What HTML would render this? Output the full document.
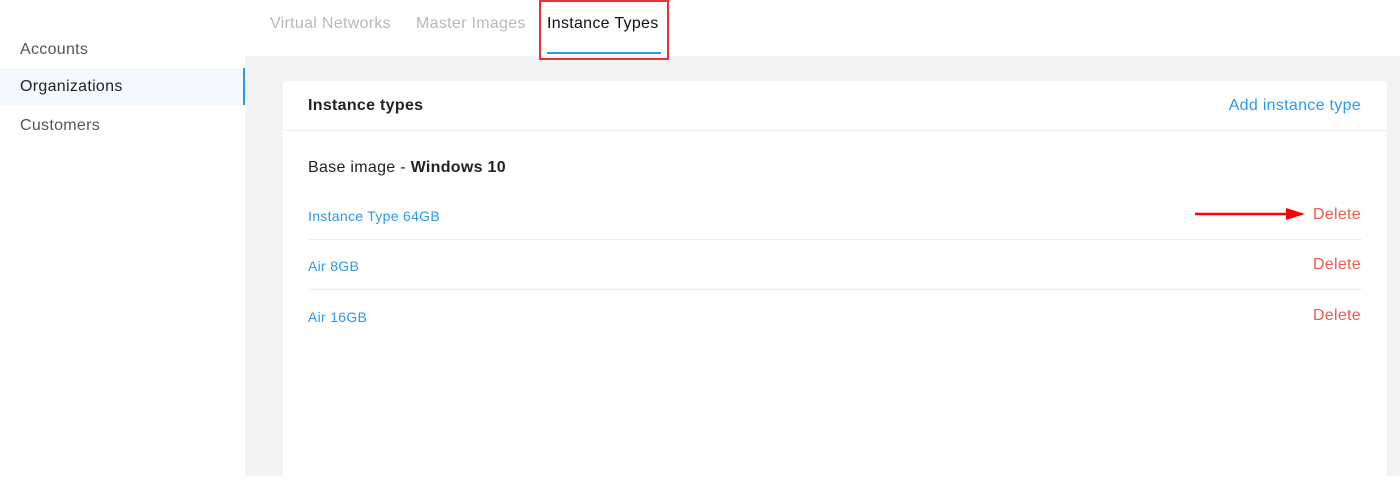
<!DOCTYPE html>
<html><head><style>
body{margin:0;width:1400px;height:476px;overflow:hidden;background:#fff;font-family:"Liberation Sans",sans-serif;position:relative}
.a{position:absolute;white-space:nowrap;letter-spacing:0.3px}
.r{right:39px}
</style></head><body>
<div class="a" style="left:245px;top:56px;width:1155px;height:420px;background:#f2f3f5"></div>
<div class="a" style="left:0;top:68px;width:243px;height:37px;background:#f3f9fe;border-right:2px solid #2a9af0"></div>
<div class="a" style="left:20px;top:41px;font-size:16px;color:#555">Accounts</div>
<div class="a" style="left:20px;top:78px;font-size:16px;color:#222">Organizations</div>
<div class="a" style="left:20px;top:117px;font-size:16px;color:#555">Customers</div>
<div class="a" style="left:270px;top:15px;font-size:16px;color:#b5b9be">Virtual Networks</div>
<div class="a" style="left:416px;top:15px;font-size:16px;color:#b5b9be">Master Images</div>
<div class="a" style="left:547px;top:15px;font-size:16px;color:#111">Instance Types</div>
<div class="a" style="left:547px;top:52px;width:114px;height:2px;background:#2a9af0"></div>
<div class="a" style="left:539px;top:0;width:126px;height:56px;border:2px solid #e53238"></div>
<div class="a" style="left:283px;top:81px;width:1104px;height:400px;background:#fff;border-radius:4px"></div>
<div class="a" style="left:283px;top:130px;width:1104px;height:1px;background:#eceef0"></div>
<div class="a" style="left:308px;top:97px;font-size:16px;font-weight:bold;color:#222">Instance types</div>
<div class="a r" style="top:97px;font-size:16px;color:#2a9af0">Add instance type</div>
<div class="a" style="left:308px;top:159px;font-size:16px;color:#222">Base image - <b>Windows 10</b></div>
<div class="a" style="left:308px;top:208px;font-size:14px;color:#2a9af0">Instance Type 64GB</div>
<div class="a r" style="top:206px;font-size:16px;color:#ef5b4f">Delete</div>
<div class="a" style="left:308px;top:239px;width:1054px;height:1px;background:#eceef0"></div>
<div class="a" style="left:308px;top:258px;font-size:14px;color:#2a9af0">Air 8GB</div>
<div class="a r" style="top:256px;font-size:16px;color:#ef5b4f">Delete</div>
<div class="a" style="left:308px;top:289px;width:1054px;height:1px;background:#eceef0"></div>
<div class="a" style="left:308px;top:309px;font-size:14px;color:#2a9af0">Air 16GB</div>
<div class="a r" style="top:307px;font-size:16px;color:#ef5b4f">Delete</div>
<svg class="a" style="left:1194px;top:208px" width="112" height="12"><line x1="1" y1="6" x2="95" y2="6" stroke="#f00" stroke-width="2.5"/><polygon points="92,0 111,6 92,12" fill="#f00"/></svg>
</body></html>
